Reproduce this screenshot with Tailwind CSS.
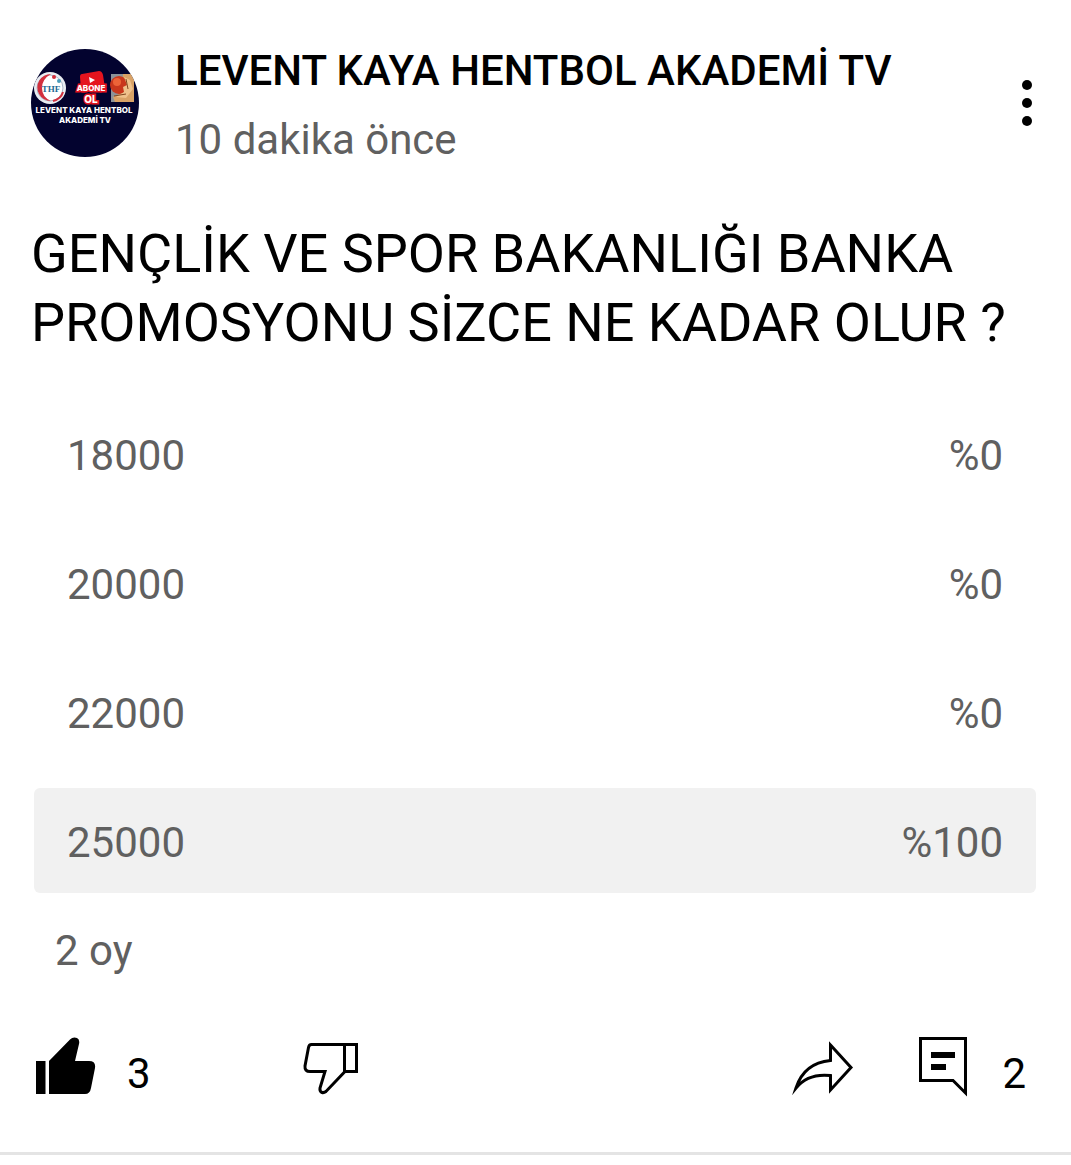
<!DOCTYPE html>
<html lang="tr">
<head>
  <meta charset="UTF-8" />
  <meta name="viewport" content="width=device-width, initial-scale=1.0" />
  <title>LEVENT KAYA HENTBOL AKADEMİ TV</title>
  <script src="https://cdn.jsdelivr.net/npm/@tailwindcss/browser@4"></script>
</head>
<body class="bg-white text-[42px] text-black font-[Roboto,sans-serif]">

  <article class="border-b-3 border-[#e4e4e4] pt-9 pb-[53px]">
    <header class="flex items-start pl-[31px] pr-6">
      <a href="#" class="mt-[13px] shrink-0" aria-label="LEVENT KAYA HENTBOL AKADEMİ TV">
        <svg class="size-[108px] rounded-full" viewBox="0 0 108 108" font-family="Inter, sans-serif" font-weight="800" text-anchor="middle">
          <rect width="108" height="108" fill="#03032f" />
          <!-- federation badge -->
          <circle cx="19" cy="39" r="16" fill="#e9edf2" />
          <circle cx="19" cy="39" r="13" fill="#fff" stroke="#a9b6c8" />
          <path d="M20 25a13.500 13.500 0 0 0-12 20q4 7 12 7q-9-4-9-13t9-14z" fill="#d22f3d" />
          <path d="M22 52q8-2 10-9" fill="none" stroke="#d22f3d" stroke-width="2" />
          <circle cx="23" cy="28" r="2" fill="#d22f3d" />
          <circle cx="28" cy="32" r="2" fill="#4b9dbb" />
          <text x="20" y="43" font-size="9" fill="#246a94" font-family="Liberation Serif, serif">THF</text>
          <!-- subscribe button -->
          <path d="M51 25l17-3q3 0 4 4l2 13-24 3-1-14q0-3 2-3z" fill="#e5141e" />
          <path d="M58 28l6 3-5 3z" fill="#fff" />
          <text x="60" y="42" font-size="8" fill="#fff" stroke="#e5141e" stroke-width="3" paint-order="stroke">ABONE</text>
          <text x="60" y="54" font-size="10" fill="#fff" stroke="#e5141e" stroke-width="3" paint-order="stroke">OL</text>
          <!-- hand holding the ball -->
          <rect x="80" y="25" width="23" height="28" fill="#8b9299" />
          <path d="M92 25h11v28H84l-2-5 8-4z" fill="#d9a267" />
          <circle cx="88" cy="36" r="9" fill="#c9371d" />
          <circle cx="86" cy="33" r="4" fill="#ec6338" />
          <path d="M93 28l6 3 3 9-7 9-10-1 8-5-1-5 4-2z" fill="#efc18b" />
          <path d="M95 30l2 10M83 47l12-2" stroke="#804520" fill="none" />
          <g fill="#fff" font-size="8">
            <text x="53" y="64">LEVENT KAYA HENTBOL</text>
            <text x="54" y="74">AKADEMİ TV</text>
          </g>
        </svg>
      </a>
      <div class="ml-9 min-w-0 flex-1 leading-[69px]">
        <h1 class="font-medium">LEVENT KAYA HENTBOL AKADEMİ TV</h1>
        <p class="text-[#606060]">10 dakika önce</p>
      </div>
      <button type="button" class="mt-[37px] flex w-10 justify-center" aria-label="Diğer seçenekler">
        <svg class="h-[60px] w-3" viewBox="0 0 12 60">
          <circle cx="6" cy="12" r="5" />
          <circle cx="6" cy="30" r="5" />
          <circle cx="6" cy="48" r="5" />
        </svg>
      </button>
    </header>

    <p class="mt-[45px] px-[31px] text-[54px] leading-[69px]">GENÇLİK VE SPOR BAKANLIĞI BANKA PROMOSYONU SİZCE NE KADAR OLUR ?</p>

    <ul class="mt-11 ml-[34px] mr-[35px] flex flex-col gap-6 leading-[101px] text-[#606060]">
      <li><button type="button" class="flex w-full justify-between rounded-md px-[33px] pt-1"><span>18000</span><span>%0</span></button></li>
      <li><button type="button" class="flex w-full justify-between rounded-md px-[33px] pt-1"><span>20000</span><span>%0</span></button></li>
      <li><button type="button" class="flex w-full justify-between rounded-md px-[33px] pt-1"><span>22000</span><span>%0</span></button></li>
      <li><button type="button" class="flex w-full justify-between rounded-md bg-[#f1f1f1] px-[33px] pt-1"><span>25000</span><span>%100</span></button></li>
    </ul>

    <p class="mt-[33px] ml-[55px] leading-[50px] text-[#606060]">2 oy</p>

    <div class="mt-[61px] flex items-start pl-9 pr-[45px] leading-[62px]">
      <button type="button" class="flex h-[62px] w-[267px] gap-[31px]" aria-label="Beğen, 3">
        <svg class="h-[62px] w-[60px]" viewBox="0 0 60 62">
          <path d="M0 24h9.500v33H0zM13 24L34 2.500Q37-.5 41 1q3 1.500 2 6l-4 17h14q7 0 6 7l-4 20q-1 6-6 6H13z" />
        </svg>
        <span class="pt-1.5">3</span>
      </button>
      <button type="button" aria-label="Beğenme">
        <svg class="h-[62px] w-14" viewBox="0 0 56 62" fill="none" stroke="#000" stroke-width="3">
          <path d="M53.500 7.500H8.500Q6 7.500 5.500 10.500L2 29Q1.500 34.500 7 34.500H22L17 51Q16.500 54.500 19 55.500Q21 56 23 54.500L42 34.500H53.500zM41.500 7.500v27" />
        </svg>
      </button>
      <button type="button" class="ml-auto" aria-label="Paylaş">
        <svg class="h-[62px] w-[62px]" viewBox="0 0 62 62" fill="none" stroke="#000" stroke-width="3" stroke-miterlimit="10">
          <path d="M38.500 8L59 30.500 38.500 53V38.500Q16 36 4 51Q12 26 38.500 23.500z" />
        </svg>
      </button>
      <button type="button" class="ml-16 flex h-[62px] gap-[34px]" aria-label="Yorumlar, 2">
        <svg class="h-[62px] w-[50px]" viewBox="0 0 50 62">
          <path d="M2.500 1.500h45V56L35 43.500H2.500z" fill="none" stroke="#000" stroke-width="3" />
          <path d="M13 15h24v6H13zM13 27h15v6H13z" />
        </svg>
        <span class="pt-1.5">2</span>
      </button>
    </div>
  </article>

</body>
</html>
